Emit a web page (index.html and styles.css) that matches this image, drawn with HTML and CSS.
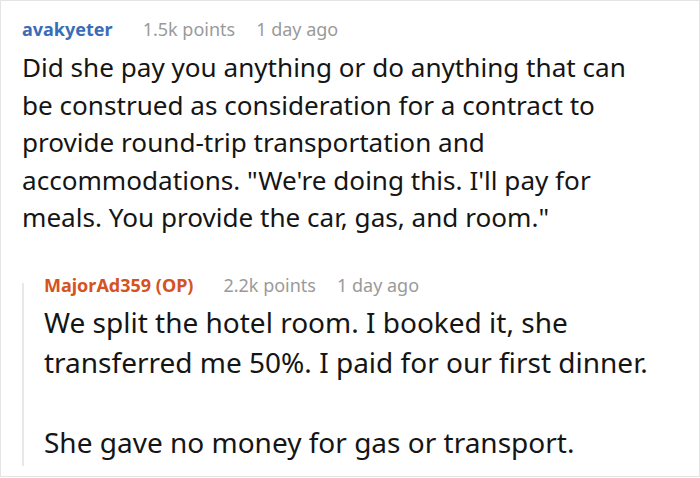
FILE: index.html
```html
<!DOCTYPE html>
<html>
<head>
<meta charset="utf-8">
<link rel="stylesheet" href="styles.css">
</head>
<body>
<div class="thread">
  <div class="comment">
    <div class="meta">
      <span class="author">avakyeter</span>
      <span class="info">1.5k points</span>
      <span class="info">1 day ago</span>
    </div>
    <p class="body">Did she pay you anything or do anything that can<br>be construed as consideration for a contract to<br>provide round-trip transportation and<br>accommodations. "We're doing this. I'll pay for<br>meals. You provide the car, gas, and room."</p>
    <div class="reply">
      <div class="meta">
        <span class="author op">MajorAd359 (OP)</span>
        <span class="info">2.2k points</span>
        <span class="info">1 day ago</span>
      </div>
      <p class="body">We split the hotel room. I booked it, she<br>transferred me 50%. I paid for our first dinner.</p>
      <p class="body">She gave no money for gas or transport.</p>
    </div>
  </div>
</div>
</body>
</html>
```

FILE: styles.css
```css
html, body {
  margin: 0;
  padding: 0;
  background: #ffffff;
}
body {
  font-family: "Noto Sans", "Open Sans", sans-serif;
}
.thread {
  width: 700px;
  height: 477px;
  box-sizing: border-box;
  border: 1px solid #e4e4e4;
  padding: 16px 10px 0 21px;
}
.meta {
  display: flex;
  align-items: baseline;
  font-size: 18px;
  line-height: 24px;
}
.author {
  font-weight: bold;
  color: #3b6cb7;
  margin-right: 30px;
}
.author.op {
  color: #d4531f;
}
.info {
  color: #9a9a9a;
  margin-right: 21px;
}
.body {
  margin: 8px 0 0;
  font-size: 26.1px;
  line-height: 37.5px;
  color: #151515;
}
.reply {
  position: relative;
  margin-top: 36.5px;
  padding-left: 22px;
}
.reply::before {
  content: "";
  position: absolute;
  left: 0;
  top: 10px;
  bottom: -4px;
  width: 2px;
  background: #e8e8e8;
}
.reply .body {
  margin-top: 5px;
  font-size: 28px;
  line-height: 40px;
}
.reply .body + .body {
  margin-top: 40px;
}
```
